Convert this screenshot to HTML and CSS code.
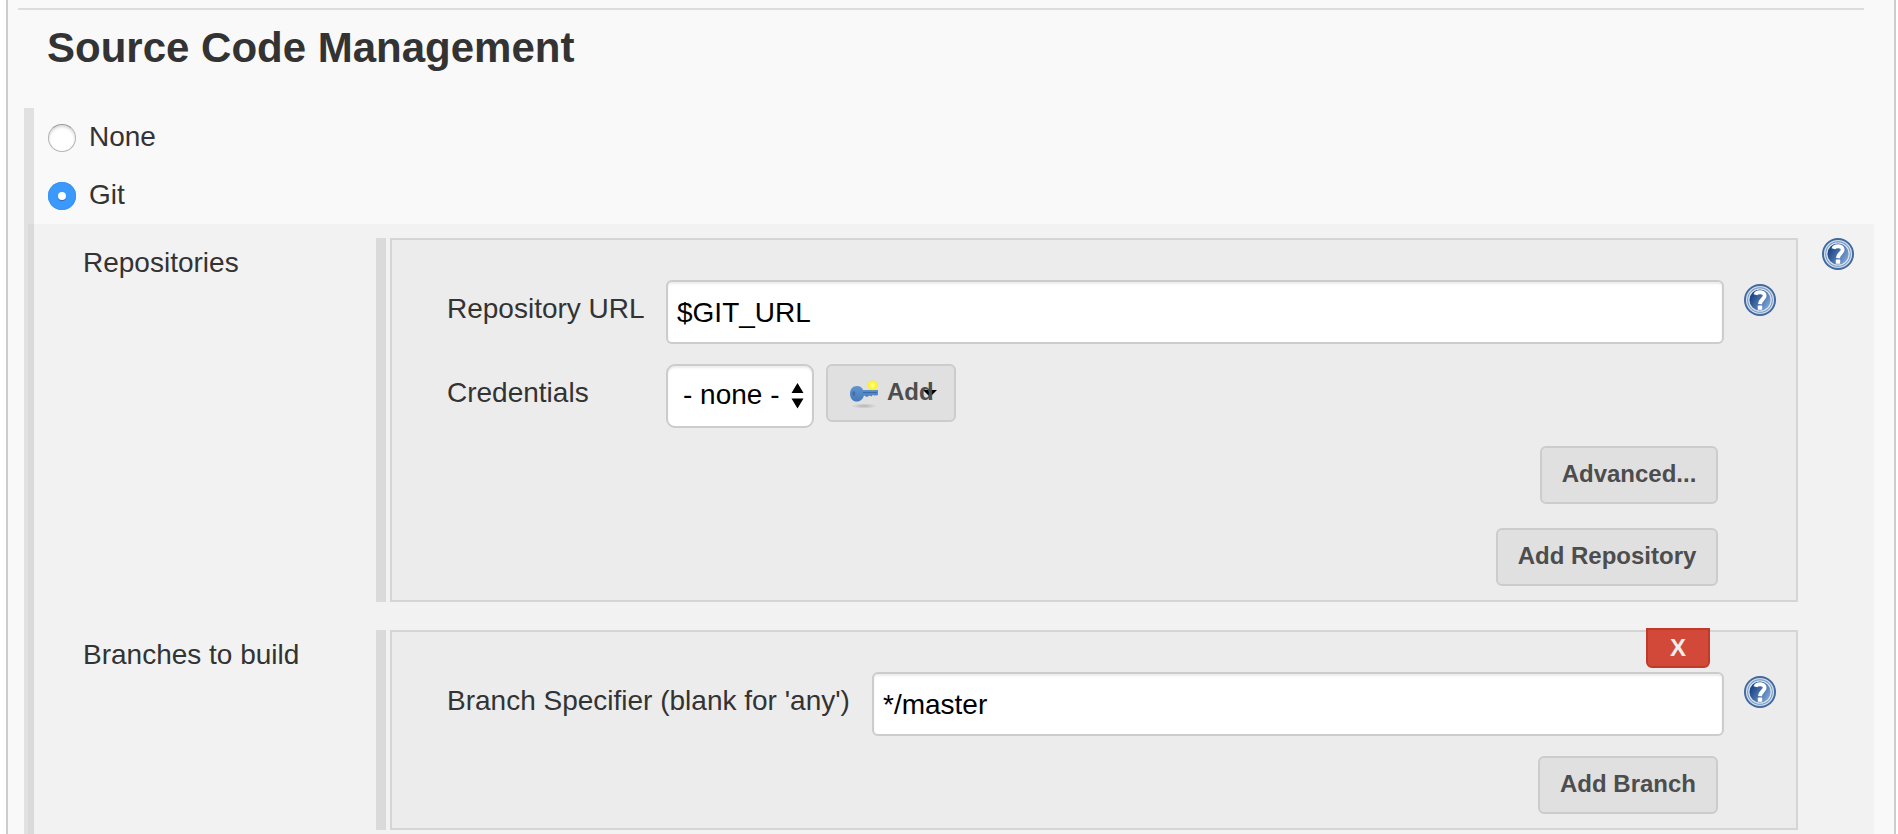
FILE: index.html
```html
<!DOCTYPE html>
<html lang="en">
<head>
<meta charset="utf-8">
<title>Source Code Management</title>
<link rel="stylesheet" href="styles.css">
</head>
<body>
<svg class="defs" width="0" height="0" aria-hidden="true">
  <defs>
    <linearGradient id="helpFill" x1="0" y1="0.2" x2="1" y2="0.8">
      <stop offset="0.15" stop-color="#1d4788"/>
      <stop offset="1" stop-color="#86aedb"/>
    </linearGradient>
    <linearGradient id="keyFill" x1="0" y1="0" x2="0" y2="1">
      <stop offset="0" stop-color="#6295d0"/>
      <stop offset="1" stop-color="#437ab9"/>
    </linearGradient>
    <radialGradient id="glow">
      <stop offset="0" stop-color="#ffffa0"/>
      <stop offset="0.3" stop-color="#fff96a"/>
      <stop offset="0.75" stop-color="#fdf221"/>
      <stop offset="1" stop-color="#fdf221" stop-opacity="0"/>
    </radialGradient>
    <radialGradient id="shade">
      <stop offset="0" stop-color="#000" stop-opacity="0.2"/>
      <stop offset="1" stop-color="#000" stop-opacity="0"/>
    </radialGradient>
    <symbol id="help" viewBox="0 0 32 32">
      <circle cx="16" cy="16" r="16" fill="#40699f"/>
      <circle cx="16" cy="16" r="13.4" fill="#6d8fbd" stroke="#cfdbea" stroke-width="1.4"/>
      <circle cx="16" cy="16" r="11.2" fill="url(#helpFill)" stroke="#d6e1ef" stroke-width="1.3"/>
      <path d="M11.4 10.8C12.400 7.400 21.200 7 20.600 12C20.200 15.400 16.200 15.400 16 20.200" fill="none" stroke="#fff" stroke-width="3.900"/>
      <rect x="13.800" y="21.600" width="4.400" height="4.200" rx="0.600" fill="#fff"/>
    </symbol>
  </defs>
</svg>
<main class="panel">
  <hr class="divider">
  <h1 class="title">Source Code Management</h1>
  <section class="scm">
    <label class="option"><span class="radio"></span><span class="option-text">None</span></label>
    <label class="option"><span class="radio radio-on"></span><span class="option-text">Git</span></label>
    <div class="nested">
      <div class="setting">
        <div class="setting-name">Repositories</div>
        <div class="rail"></div>
        <div class="block block-repo">
          <div class="field">
            <label class="field-name field-name-url" for="url">Repository URL</label>
            <input class="text" id="url" type="text" value="$GIT_URL">
            <svg class="help"><use href="#help"/></svg>
          </div>
          <div class="field field-credentials">
            <span class="field-name field-name-url">Credentials</span>
            <div class="select"><span>- none -</span>
              <svg class="select-arrows" width="13" height="26" viewBox="0 0 13 26"><path d="M6.5 0L12.500 10H0.500ZM0.500 15.500H12.500L6.500 25.500Z" fill="#000"/></svg>
            </div>
            <button class="button button-add" type="button">
              <svg class="key" width="32" height="32" viewBox="0 0 32 32">
                <ellipse cx="16" cy="28" rx="13" ry="2.600" fill="url(#shade)"/>
                <path d="M9 8C12.500 8 14.500 10 15 12H30V17L28 17.500H26L25 16.800L23.500 18.500L21.500 17.500L19 19L16 17.500C15 21 12.500 23.500 9 23.500C4.500 23.500 2 20 2 15.700S4.500 8 9 8Z" fill="url(#keyFill)"/>
                <path d="M15 14.500H29" stroke="#376bac"/>
                <ellipse cx="5.800" cy="15.500" rx="1.500" ry="2.600" fill="#4a6f9f"/>
                <circle cx="24.600" cy="7.300" r="5.500" fill="url(#glow)"/>
              </svg>
              <svg class="caret" width="14" height="7" viewBox="0 0 14 7"><path d="M0 0H14L7 7Z" fill="#000"/></svg>
              <span class="button-label">Add</span>
            </button>
          </div>
          <div class="actions actions-advanced"><button class="button button-advanced" type="button">Advanced...</button></div>
          <div class="actions actions-repo"><button class="button button-repo" type="button">Add Repository</button></div>
        </div>
        <svg class="help help-outer"><use href="#help"/></svg>
      </div>
      <div class="setting">
        <div class="setting-name">Branches to build</div>
        <div class="rail"></div>
        <div class="block block-branch">
          <button class="delete" type="button">X</button>
          <div class="field">
            <label class="field-name field-name-branch" for="branch">Branch Specifier (blank for 'any')</label>
            <input class="text" id="branch" type="text" value="*/master">
            <svg class="help"><use href="#help"/></svg>
          </div>
          <div class="actions actions-branch"><button class="button button-branch" type="button">Add Branch</button></div>
        </div>
      </div>
    </div>
  </section>
</main>
</body>
</html>
```
FILE: styles.css
```css
* {
  box-sizing: border-box;
}

body {
  margin: 0;
  height: 834px;
  overflow: hidden;
  background: #fff;
  color: #333;
  font: 28px/32px "Liberation Sans", Arial, sans-serif;
}

.defs {
  position: absolute;
}

.panel {
  height: 834px;
  margin: 0 2px 0 6px;
  padding: 8px 20px 0 16px;
  border: solid #ccc;
  border-width: 0 2px;
  background: #f9f9f9;
}

.divider {
  height: 2px;
  margin: 0 10px 0 -6px;
  border: 0;
  background: #ddd;
}

.title {
  margin: 13px 0 0;
  padding-left: 23px;
  font-size: 42px;
  line-height: 50px;
}

.scm {
  height: 726px;
  margin-top: 35px;
  border-left: 10px solid #e1e1e1;
}

.option {
  display: flex;
  height: 58px;
  padding: 16px 0 0 14px;
}

.radio {
  width: 28px;
  height: 28px;
  border: 1px solid #b4b4b4;
  border-top-color: #999;
  border-radius: 50%;
  background: #fff;
  box-shadow: inset 0 2px 3px rgba(0, 0, 0, 0.15);
}

.radio-on {
  display: grid;
  place-items: center;
  border: 0;
  background: #3b99fc;
  box-shadow: inset 0 0 0 1px #3d93f0;
}

.radio-on::after {
  content: "";
  width: 8px;
  height: 8px;
  border-radius: 50%;
  background: #fff;
  box-shadow: 0 1px 1px rgba(0, 0, 0, 0.3);
}

.option-text {
  margin: -3px 0 0 13px;
}

.nested {
  display: flex;
  flex-direction: column;
  gap: 28px;
  height: 610px;
  margin-left: -6px;
  padding-top: 14px;
  background: rgba(0, 0, 0, 0.026);
}

.setting {
  display: flex;
  align-items: stretch;
}

.setting-name {
  width: 348px;
  padding: 9px 0 0 55px;
}

.rail {
  width: 10px;
  margin-right: 4px;
  background: #dadada;
}

.block {
  position: relative;
  width: 1408px;
  padding: 0 20px 0 55px;
  border: 2px solid #d5d5d5;
  background: #ececec;
}

.block-repo {
  height: 364px;
  padding-top: 40px;
}

.block-branch {
  height: 200px;
  padding-top: 40px;
}

.field {
  display: flex;
  align-items: flex-start;
}

.field-credentials {
  margin-top: 20px;
}

.field-name {
  flex: none;
  padding-top: 13px;
  white-space: nowrap;
}

.field-name-url {
  width: 219px;
}

.field-name-branch {
  width: 425px;
}

.text {
  flex: 1;
  min-width: 0;
  height: 64px;
  padding: 2px 9px 0;
  border: 2px solid #ccc;
  border-radius: 6px;
  background: #fff;
  box-shadow: inset 0 2px 2px rgba(0, 0, 0, 0.075);
  color: #000;
  font: inherit;
}

.help {
  flex: none;
  width: 32px;
  height: 32px;
  margin: 4px 0 0 20px;
}

.help-outer {
  margin: 0 0 0 24px;
}

.select {
  display: flex;
  align-items: center;
  justify-content: space-between;
  width: 148px;
  height: 64px;
  padding: 0 8px 2px 15px;
  border: 2px solid #ccc;
  border-radius: 9px;
  background: #fff;
  box-shadow: inset 0 2px 2px rgba(0, 0, 0, 0.075);
  color: #000;
}

.select-arrows {
  margin-top: 2px;
}

.button {
  height: 58px;
  padding: 0 0 2px;
  border: 2px solid #ccc;
  border-radius: 6px;
  background: #e0e0e0;
  color: #4d4d4d;
  font: bold 24px/28px "Liberation Sans", Arial, sans-serif;
}

.button-add {
  position: relative;
  display: flex;
  align-items: center;
  gap: 7px;
  width: 130px;
  margin-left: 12px;
  padding-left: 20px;
}

.button-advanced {
  width: 178px;
}

.button-repo {
  width: 222px;
}

.button-branch {
  width: 180px;
}

.button-label {
  position: relative;
}

.key {
  flex: none;
  margin-top: 3px;
}

.caret {
  position: absolute;
  top: 24px;
  right: 17px;
}

.actions {
  display: flex;
  justify-content: flex-end;
  padding-right: 58px;
}

.actions-advanced {
  margin-top: 18px;
}

.actions-repo {
  margin-top: 24px;
}

.actions-branch {
  margin-top: 20px;
}

.delete {
  position: absolute;
  top: -4px;
  right: 86px;
  width: 64px;
  height: 40px;
  padding: 0;
  border: 2px solid #c0392b;
  border-radius: 0 0 6px 6px;
  background: #d24939;
  color: #eee;
  font: bold 24px/28px "Liberation Sans", Arial, sans-serif;
}
```
